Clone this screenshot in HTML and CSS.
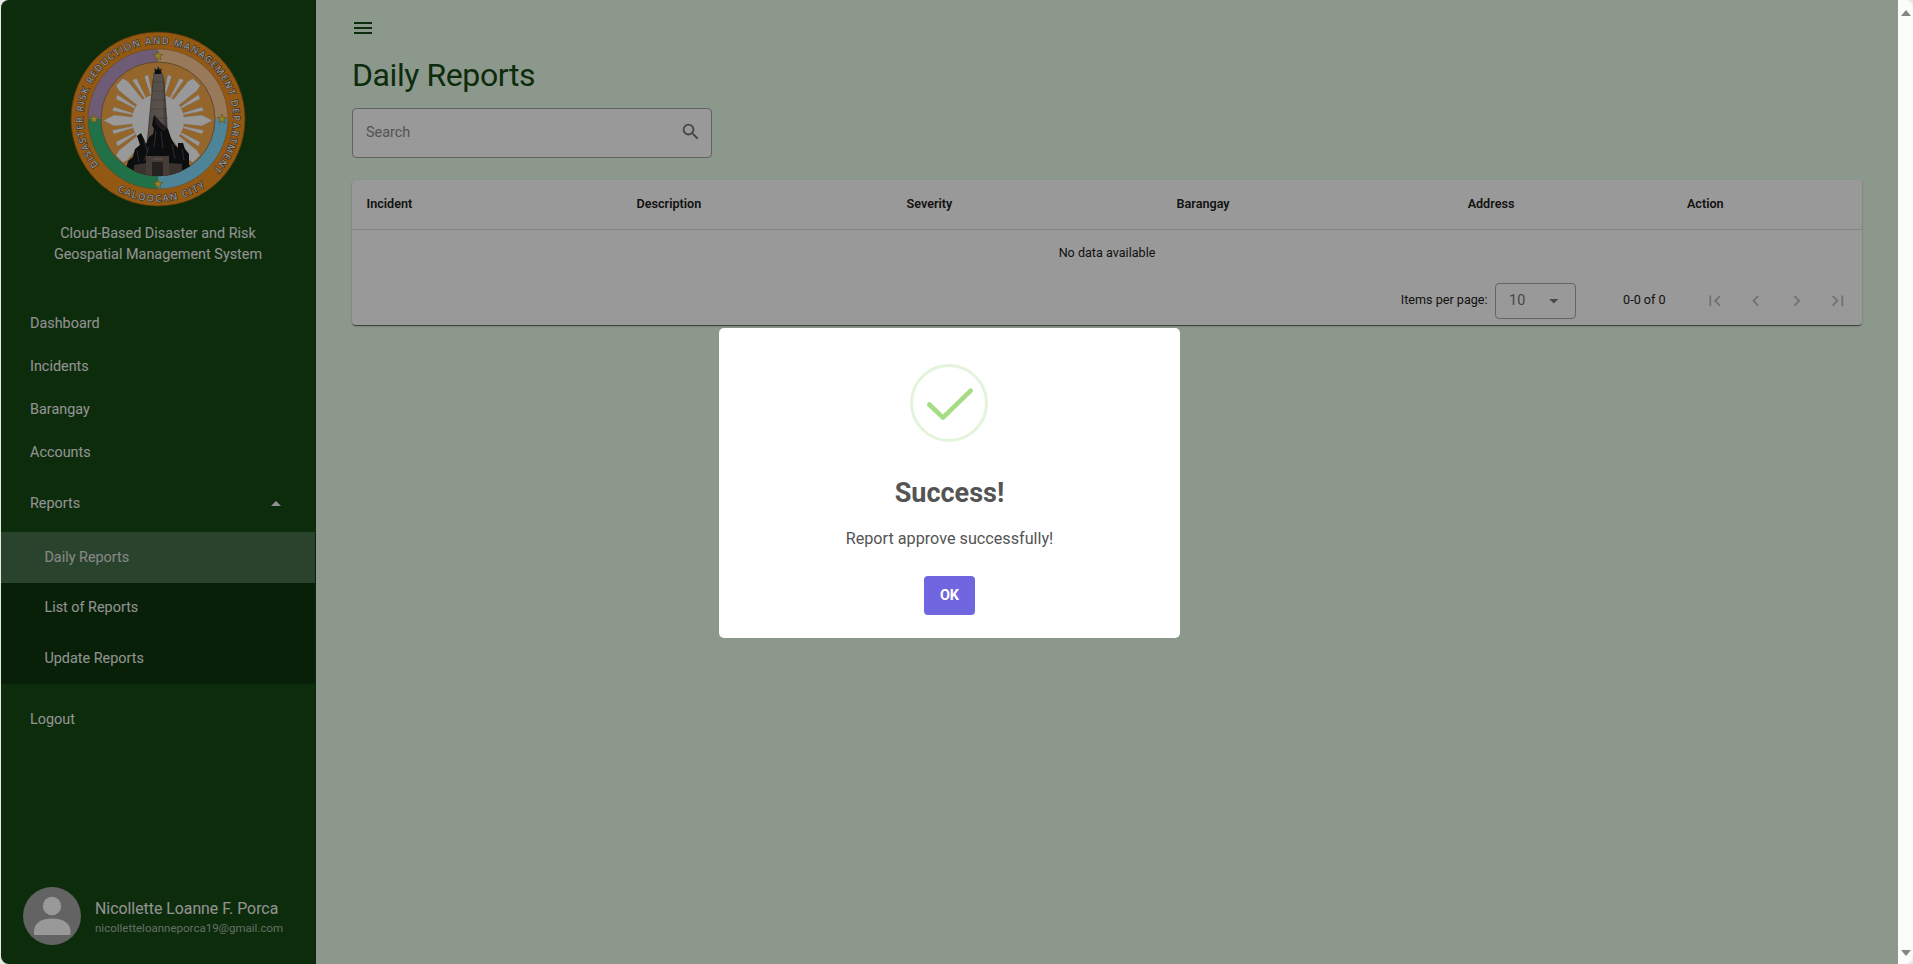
FILE: index.html
```html
<!DOCTYPE html>
<html lang="en">
<head>
<meta charset="utf-8">
<title>Daily Reports</title>
<link rel="stylesheet" href="styles.css">
</head>
<body>
<div class="window">
  <div class="app">
    <aside class="sidebar">
      <svg class="logo" viewBox="-88 -88 176 176">
        <defs>
          <path id="arc-top" d="M-59.1,46.2A75,75 0 1 1 54.9,51.1"/>
          <path id="arc-bottom" d="M-41,71.8A82.7,82.7 0 0 0 48,67.3"/>
          <path id="star" d="M0,-5L1.3,-1.6L4.8,-1.5L2,.7L3,4.1L0,2.1L-3,4.1L-2,.7L-4.8,-1.5L-1.3,-1.6Z"/>
          <g id="ray">
            <path d="M20,-3L44,-5.5L54.5,0L44,5.5L20,3Z"/>
            <path d="M25,-7.4L44,-13.6L46,-9.8L25,-5.6Z"/>
            <path d="M25,7.4L44,13.6L46,9.8L25,5.6Z"/>
          </g>
          <g id="ray-wide">
            <path d="M20,-3.4L49,-6.5L54.5,-5V5L49,6.5L20,3.4Z"/>
            <path d="M25,-8L45,-14.6L47,-10.4L25,-6Z"/>
            <path d="M25,8L45,14.6L47,10.4L25,6Z"/>
          </g>
          <clipPath id="disc"><circle r="57"/></clipPath>
          <linearGradient id="stone" x1="0" x2="1" y1="0" y2="0">
            <stop offset="0" stop-color="#8d8078"/><stop offset=".7" stop-color="#94877e"/><stop offset="1" stop-color="#4b4340"/>
          </linearGradient>
        </defs>
        <circle r="87" fill="#f5931d" stroke="#9c5c14" stroke-width=".8"/>
        <path d="M0,0V-70A70,70 0 0 0 -70,0Z" fill="#b899c6"/>
        <path d="M0,0V-70A70,70 0 0 1 70,0Z" fill="#fdcb98"/>
        <path d="M0,0V70A70,70 0 0 1 -70,0Z" fill="#37bc79"/>
        <path d="M0,0V70A70,70 0 0 0 70,0Z" fill="#82dcfd"/>
        <circle r="70" fill="none" stroke="#a06a38" stroke-width=".5"/>
        <circle r="57" fill="#f9aa4a" stroke="#7b6048" stroke-width=".7"/>
        <g clip-path="url(#disc)">
          <g fill="#fff" stroke="#a5a08c" stroke-width=".3">
            <use href="#ray" y="1.5"/>
            <use href="#ray-wide" transform="translate(0 1.5) rotate(45)"/>
            <use href="#ray" transform="translate(0 1.5) rotate(90)"/>
            <use href="#ray-wide" transform="translate(0 1.5) rotate(135)"/>
            <use href="#ray" transform="translate(0 1.5) rotate(180)"/>
            <use href="#ray-wide" transform="translate(0 1.5) rotate(225)"/>
            <use href="#ray" transform="translate(0 1.5) rotate(270)"/>
            <use href="#ray-wide" transform="translate(0 1.5) rotate(315)"/>
          </g>
          <circle cy="1.5" r="26" fill="#fff"/>
          <path d="M-4,-46L0,-50L4,-46L6,-39L11,36H-12L-5,-39Z" fill="url(#stone)" stroke="#46403d" stroke-width=".6"/>
          <path d="M-5,-37H6M-6,-28H7M-7,-19H8M-8,-10H9M-9,-1H10" stroke="#5f5550" stroke-width=".5"/>
          <path d="M-3,-45L-3.5,-51L-1,-49L0,-53L2,-49L3.5,-51L3,-45Z" fill="#16181a"/>
          <path d="M-34,57L-30,42L-25,38L-23,30L-18,26L-21,17L-17,14L-14,20L-12,25L-9,18L-5,15L-4,10L-6,6L-4,-4L3,4L10,10L13,19L17,26L20,29L20,24L25,24L27,30L31,35L31,45L37,57Z" fill="#151719"/>
          <path d="M-4,-4L9,10L5,12L-2,5Z" fill="#333032"/>
          <path d="M-14,22L-10,34M-2,12L-4,28M3,13L5,29M14,25L17,40M-21,31L-19,43M24,30L26,41M-9,28L-14,42" stroke="#4b4c50" stroke-width="1"/>
          <path d="M-24,60V46L-12,44V37H11V44L24,45V60Z" fill="#625650"/>
          <path d="M-12,37H11V60H-12Z" fill="#75665f"/>
          <path d="M-6,43H5V60H-6Z" fill="#3e3836"/>
          <path d="M-5,40H5" stroke="#a08d80" stroke-width="1"/>
        </g>
        <g fill="#f5d945" stroke="#98802c" stroke-width=".6">
          <use href="#star" y="-63"/><use href="#star" y="65"/><use href="#star" x="-64"/><use href="#star" x="64"/>
        </g>
        <text class="seal-text"><textPath href="#arc-top" textLength="340">DISASTER RISK REDUCTION AND MANAGEMENT DEPARTMENT</textPath></text>
        <text class="seal-text"><textPath href="#arc-bottom" textLength="93">CALOOCAN CITY</textPath></text>
      </svg>
      <p class="brand">Cloud-Based Disaster and Risk<br>Geospatial Management System</p>
      <nav class="nav">
        <a class="nav-item">Dashboard</a>
        <a class="nav-item">Incidents</a>
        <a class="nav-item">Barangay</a>
        <a class="nav-item">Accounts</a>
        <a class="nav-group"><span>Reports</span><svg class="icon-24" viewBox="0 0 24 24"><path d="M7,15L12,10L17,15H7Z"/></svg></a>
        <div class="subnav">
          <a class="sub-item active">Daily Reports</a>
          <a class="sub-item">List of Reports</a>
          <a class="sub-item">Update Reports</a>
        </div>
        <a class="nav-item logout">Logout</a>
      </nav>
      <div class="profile">
        <svg class="avatar" viewBox="0 0 58 58"><circle cx="29" cy="29" r="29" fill="#a5a5a5"/><circle cx="29" cy="19" r="9.2" fill="#fff"/><path d="M11,48V44C11,36 19,31.5 29,31.5S47.5,36 47.5,44V48Z" fill="#fff"/></svg>
        <div><div class="profile-name">Nicollette Loanne F. Porca</div><div class="profile-mail">nicolletteloanneporca19@gmail.com</div></div>
      </div>
    </aside>
    <main class="main">
      <svg class="menu-icon" viewBox="0 0 24 24"><path d="M3,6H21V8H3V6M3,11H21V13H3V11M3,16H21V18H3V16Z"/></svg>
      <h1 class="title">Daily Reports</h1>
      <div class="search"><span>Search</span><svg class="icon-21" viewBox="0 0 24 24"><path d="M9.5,3A6.5,6.5 0 0,1 16,9.5C16,11.11 15.41,12.59 14.44,13.73L14.71,14H15.5L20.5,19L19,20.5L14,15.5V14.71L13.73,14.44C12.59,15.41 11.11,16 9.5,16A6.5,6.5 0 0,1 3,9.5A6.5,6.5 0 0,1 9.5,3M9.5,5C7,5 5,7 5,9.5C5,12 7,14 9.5,14C12,14 14,12 14,9.5C14,7 12,5 9.5,5Z"/></svg></div>
      <section class="table">
        <div class="table-head">
          <span>Incident</span><span>Description</span><span>Severity</span><span>Barangay</span><span class="center">Address</span><span class="center">Action</span>
        </div>
        <div class="table-empty">No data available</div>
        <div class="table-foot">
          <span>Items per page:</span>
          <div class="select"><span>10</span><svg class="icon-21" viewBox="0 0 24 24"><path d="M7,10L12,15L17,10H7Z"/></svg></div>
          <span class="range">0-0 of 0</span>
          <div class="pager">
            <svg class="icon-21" viewBox="0 0 24 24"><path d="M18.41,16.59L13.82,12L18.41,7.41L17,6L11,12L17,18L18.41,16.59M6,6H8V18H6V6Z"/></svg>
            <svg class="icon-21" viewBox="0 0 24 24"><path d="M15.41,16.58L10.83,12L15.41,7.41L14,6L8,12L14,18L15.41,16.58Z"/></svg>
            <svg class="icon-21" viewBox="0 0 24 24"><path d="M8.59,16.58L13.17,12L8.59,7.41L10,6L16,12L10,18L8.59,16.58Z"/></svg>
            <svg class="icon-21" viewBox="0 0 24 24"><path d="M5.59,7.41L10.18,12L5.59,16.59L7,18L13,12L7,6L5.59,7.41M16,6H18V18H16V6Z"/></svg>
          </div>
        </div>
      </section>
    </main>
    <div class="backdrop">
      <div class="dialog">
        <svg class="success" viewBox="0 0 78 78"><circle cx="39" cy="39" r="37.5" fill="none" stroke="#e4f4db" stroke-width="3"/><path d="M19.3,40.5L33,53.7L60.7,26.6" fill="none" stroke="#a5dc86" stroke-width="4.6" stroke-linecap="round" stroke-linejoin="round"/></svg>
        <h2>Success!</h2>
        <p>Report approve successfully!</p>
        <button class="ok">OK</button>
      </div>
    </div>
  </div>
  <div class="scrollbar">
    <svg viewBox="0 0 10 6"><path d="M5,0L10,6H0Z"/></svg>
    <svg viewBox="0 0 10 6"><path d="M0,0H10L5,6Z"/></svg>
  </div>
</div>
</body>
</html>
```
FILE: styles.css
```css
* { box-sizing: border-box; }
html { font-size: 14.4px; }
body { margin: 0; background: #e6e9e6; font-family: Roboto, "Liberation Sans", sans-serif; line-height: 1.5; overflow: hidden; }
svg { display: block; flex: none; fill: currentColor; }
.window { display: flex; height: 964px; margin-left: 1px; border-radius: 8px; overflow: hidden; }
.app { position: relative; display: flex; flex: 1; background: #ebfeea; }
.icon-24 { width: 24px; height: 24px; }
.icon-21 { width: 21.6px; height: 21.6px; }

.sidebar { display: flex; flex-direction: column; width: 315px; background: #154a15; border-right: 1px solid #123f12; color: #fff; }
.logo { width: 176px; height: 176px; margin: 31px 0 0 68.5px; }
.seal-text { font-family: "Open Sans", sans-serif; font-size: 9.5px; font-weight: 600; fill: #eee; stroke: #4c4038; stroke-width: 1.1px; paint-order: stroke; }
.brand { margin: 16px 0 0; text-align: center; line-height: 21px; color: #f4f4f4; }
.nav { margin-top: 37px; color: #f4f4f4; }
.nav-item { display: flex; align-items: center; height: 43px; padding-left: 29px; }
.nav-group { display: flex; align-items: center; justify-content: space-between; height: 58px; padding: 0 27.5px 0 29px; }
.nav-group span { padding-top: 2px; }
.subnav { background: #0d360d; }
.sub-item { display: flex; align-items: center; height: 50.6px; padding-left: 43.4px; }
.sub-item.active { padding-top: 1px; background: #46704a; color: #e0e2e0; }
.logout { margin-top: 15px; }
.profile { display: flex; align-items: center; gap: 14px; margin: auto 0 19px 22px; }
.avatar { width: 58px; height: 58px; }
.profile-name { font-size: 15.84px; line-height: 22px; margin-top: 2px; color: #f4f4f4; }
.profile-mail { font-size: 11.52px; line-height: 17px; color: #a8b8a8; }

.main { flex: 1; padding: 16px 36px 0; }
.menu-icon { width: 24px; height: 24px; margin-left: -1px; color: #154a15; }
.title { margin: 11px 0 9px; font-size: 32px; line-height: 48px; font-weight: 400; letter-spacing: -.42px; color: #154a15; }
.search { display: flex; align-items: center; justify-content: space-between; width: 360px; height: 50px; padding: 0 9.5px 0 13px; background: #fff; border: 1px solid #a4a4a4; border-radius: 4px; color: #8b8b8b; }
.search svg { margin-top: -3px; color: #767676; }
.table { width: 1510px; height: 145px; margin-top: 22px; background: #fff; border-radius: 4px; font-size: 12.6px; color: #212121; box-shadow: 0 2px 1px -1px rgba(0,0,0,.4), 0 1px 1px rgba(0,0,0,.25), 0 1px 3px rgba(0,0,0,.15); }
.table-head { display: grid; grid-template-columns: 270px 270px 270px 270px 118px 312px; align-items: center; height: 50px; padding-bottom: 1px; border-bottom: 1px solid #dedede; font-weight: 600; }
.table-head span { padding-left: 14.6px; }
.table-head .center { padding: 0; text-align: center; }
.table-head .center:last-child { padding-right: 1.5px; }
.table-empty { height: 46px; line-height: 46px; text-align: center; }
.table-foot { display: flex; align-items: center; justify-content: flex-end; height: 49px; padding-right: 13px; }
.select { display: flex; align-items: center; justify-content: space-between; width: 81px; height: 36px; margin-left: 7px; padding: 0 10px 0 13.5px; border: 1px solid #a8a8a8; border-radius: 4px; font-size: 14.4px; color: #777; }
.range { margin-left: 47.5px; }
.pager { display: flex; gap: 19.5px; margin-left: 38.5px; color: #bdbdbd; }

.backdrop { position: absolute; inset: 0; padding: 328px 0 0 718px; background: rgba(0,0,0,.4); }
.dialog { display: flex; flex-direction: column; align-items: center; width: 461px; height: 310px; padding-top: 36px; background: #fff; border-radius: 5px; color: #545454; }
.success { width: 78px; height: 78px; margin-right: 1px; }
.dialog h2 { margin: 31px 0 0; font-size: 27px; line-height: 40px; font-weight: 700; }
.dialog p { margin: 14px 0 0; font-size: 16.2px; line-height: 24px; }
.ok { width: 51px; height: 39px; margin-top: 25px; padding: 0; border: 0; border-radius: 4px; background: #7066e0; color: #fff; font: 700 14.4px Roboto, sans-serif; }

.scrollbar { display: flex; flex-direction: column; align-items: center; justify-content: space-between; width: 15px; padding: 10px 0 8px; background: #fcfcfc; color: #858585; }
.scrollbar svg { width: 10px; height: 6px; }
```
